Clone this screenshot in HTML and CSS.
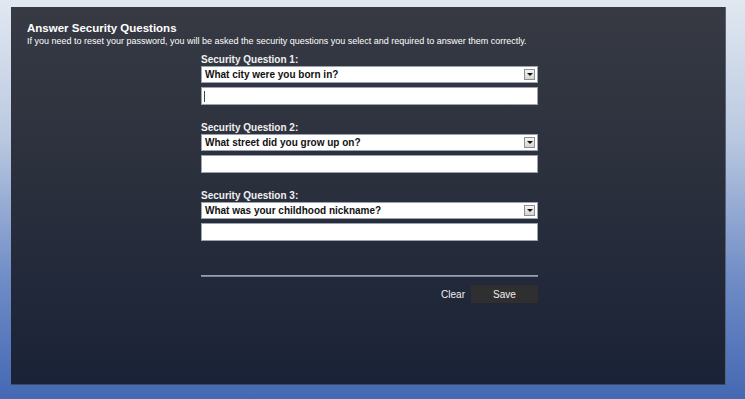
FILE: index.html
```html
<!DOCTYPE html>
<html lang="en">
<head>
  <meta charset="UTF-8">
  <title>Answer Security Questions</title>
  <link rel="stylesheet" href="styles.css">
</head>
<body>
  <div class="panel">
    <div class="header">
      <h1 class="title">Answer Security Questions</h1>
      <p class="subtitle">If you need to reset your password, you will be asked the security questions you select and required to answer them correctly.</p>
    </div>

    <div class="form">
      <div class="question">
        <label class="q-label">Security Question 1:</label>
        <div class="select">
          <span class="select-text">What city were you born in?</span>
          <span class="select-arrow"></span>
        </div>
        <div class="answer"><span class="caret"></span></div>
      </div>

      <div class="question">
        <label class="q-label">Security Question 2:</label>
        <div class="select">
          <span class="select-text">What street did you grow up on?</span>
          <span class="select-arrow"></span>
        </div>
        <div class="answer"></div>
      </div>

      <div class="question">
        <label class="q-label">Security Question 3:</label>
        <div class="select">
          <span class="select-text">What was your childhood nickname?</span>
          <span class="select-arrow"></span>
        </div>
        <div class="answer"></div>
      </div>

      <div class="divider"></div>

      <div class="actions">
        <span class="clear-link">Clear</span>
        <button class="save-button">Save</button>
      </div>
    </div>
  </div>
</body>
</html>
```

FILE: styles.css
```css
:root {
  --panel-top: #373a43;
  --panel-bottom: #1a2237;
  --text-color: #ffffff;
  --field-border: #9aa3b0;
}

body {
  margin: 0;
  width: 745px;
  height: 399px;
  overflow: hidden;
  font-family: 'Liberation Sans', Arial, sans-serif;
  background: linear-gradient(to bottom, #e2e8f1 0%, #b9c8e0 35%, #6f8cc6 70%, #4468b3 100%);
  padding: 7px 0 0 11px;
  box-sizing: border-box;
}

.panel {
  width: 715px;
  height: 378px;
  background: linear-gradient(to bottom, var(--panel-top) 0%, #2b303d 45%, var(--panel-bottom) 100%);
  border-right: 1px solid #5a6478;
  border-bottom: 1px solid #3c4a66;
  box-sizing: border-box;
  color: var(--text-color);
  padding: 14px 0 0 16px;
}

.title {
  font-size: 11.5px;
  font-weight: bold;
  margin: 0;
  line-height: 15px;
}

.subtitle {
  font-size: 9px;
  margin: 0;
  line-height: 11px;
}

.form {
  width: 337px;
  margin: 7px 0 0 174px;
}

.question {
  margin-bottom: 17px;
}

.q-label {
  display: block;
  font-size: 10px;
  font-weight: bold;
  line-height: 12px;
  color: #f0f0f0;
}

.select {
  display: flex;
  align-items: center;
  justify-content: space-between;
  height: 17px;
  background-color: #ffffff;
  border: 1px solid var(--field-border);
  box-sizing: border-box;
  padding: 0 2px 0 3px;
}

.select-text {
  font-size: 10px;
  font-weight: bold;
  color: #111111;
}

.select-arrow {
  width: 11px;
  height: 11px;
  background: linear-gradient(to bottom, #f4f4f4, #d4d4d4);
  border: 1px solid #8f8f8f;
  box-sizing: border-box;
  position: relative;
}

.select-arrow:after {
  content: "";
  position: absolute;
  left: 2px;
  top: 3px;
  border-left: 3px solid transparent;
  border-right: 3px solid transparent;
  border-top: 3px solid #111111;
}

.answer {
  height: 18px;
  margin-top: 4px;
  background-color: #ffffff;
  border: 1px solid var(--field-border);
  box-sizing: border-box;
  padding: 3px 0 0 2px;
}

.caret {
  display: block;
  width: 1px;
  height: 11px;
  background-color: #444444;
}

.divider {
  height: 2px;
  margin-top: 34px;
  background: linear-gradient(to bottom, #a7afbd, #6f7787);
}

.actions {
  display: flex;
  justify-content: flex-end;
  align-items: center;
  margin-top: 8px;
  gap: 6px;
}

.clear-link {
  font-size: 10px;
  color: #f0f0f0;
}

.save-button {
  width: 67px;
  height: 18px;
  border: none;
  background-color: #302f30;
  color: #f0f0f0;
  font-family: 'Liberation Sans', Arial, sans-serif;
  font-size: 10px;
  padding: 0;
}
```
